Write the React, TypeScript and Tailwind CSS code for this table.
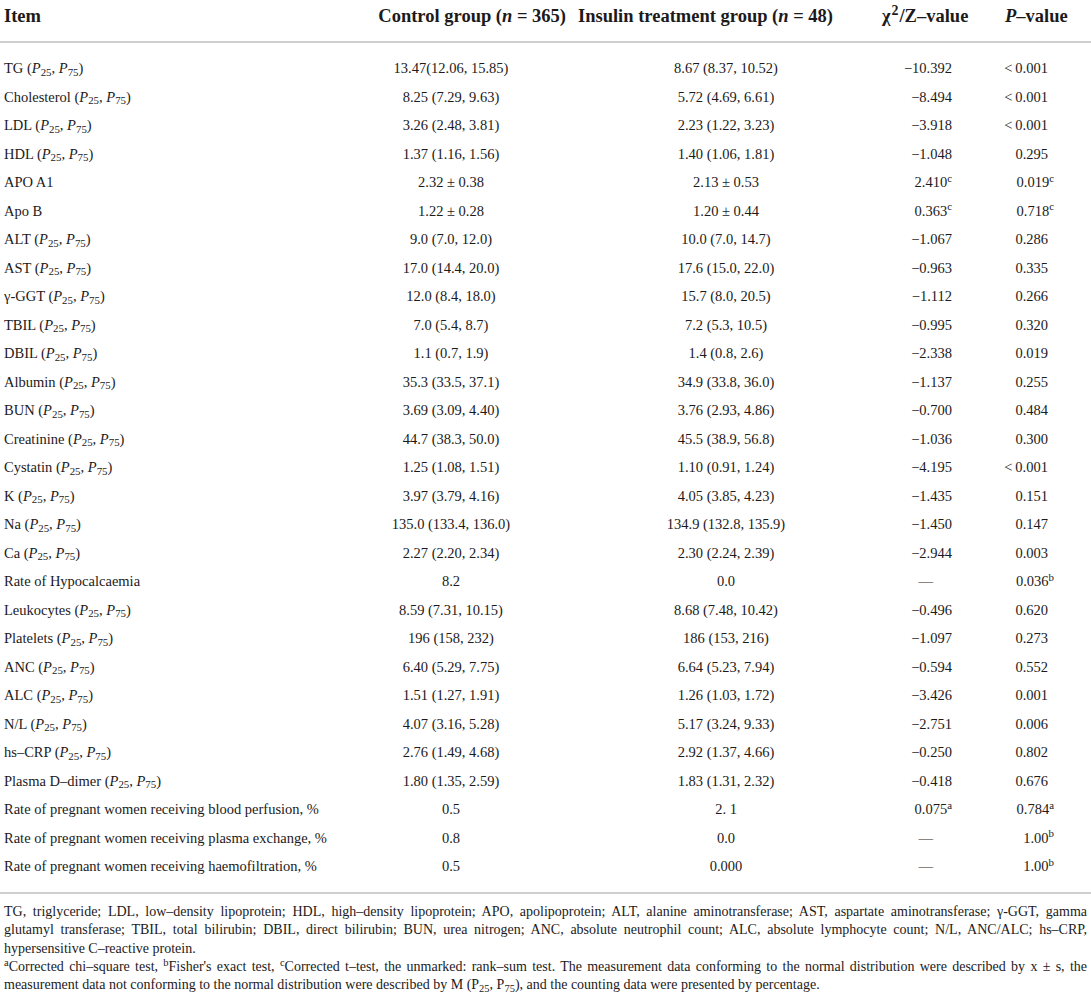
import React from 'react';

type Row = {
  item: string;
  p?: boolean;
  c: string;
  t: string;
  z: string;
  zs?: string;
  pv: string;
  ps?: string;
};

const rows: Row[] = [
  { item: 'TG', p: true, c: '13.47(12.06, 15.85)', t: '8.67 (8.37, 10.52)', z: '−10.392', pv: '<\u20090.001' },
  { item: 'Cholesterol', p: true, c: '8.25 (7.29, 9.63)', t: '5.72 (4.69, 6.61)', z: '−8.494', pv: '<\u20090.001' },
  { item: 'LDL', p: true, c: '3.26 (2.48, 3.81)', t: '2.23 (1.22, 3.23)', z: '−3.918', pv: '<\u20090.001' },
  { item: 'HDL', p: true, c: '1.37 (1.16, 1.56)', t: '1.40 (1.06, 1.81)', z: '−1.048', pv: '0.295' },
  { item: 'APO A1', c: '2.32 ± 0.38', t: '2.13 ± 0.53', z: '2.410', zs: 'c', pv: '0.019', ps: 'c' },
  { item: 'Apo B', c: '1.22 ± 0.28', t: '1.20 ± 0.44', z: '0.363', zs: 'c', pv: '0.718', ps: 'c' },
  { item: 'ALT', p: true, c: '9.0 (7.0, 12.0)', t: '10.0 (7.0, 14.7)', z: '−1.067', pv: '0.286' },
  { item: 'AST', p: true, c: '17.0 (14.4, 20.0)', t: '17.6 (15.0, 22.0)', z: '−0.963', pv: '0.335' },
  { item: 'γ-GGT', p: true, c: '12.0 (8.4, 18.0)', t: '15.7 (8.0, 20.5)', z: '−1.112', pv: '0.266' },
  { item: 'TBIL', p: true, c: '7.0 (5.4, 8.7)', t: '7.2 (5.3, 10.5)', z: '−0.995', pv: '0.320' },
  { item: 'DBIL', p: true, c: '1.1 (0.7, 1.9)', t: '1.4 (0.8, 2.6)', z: '−2.338', pv: '0.019' },
  { item: 'Albumin', p: true, c: '35.3 (33.5, 37.1)', t: '34.9 (33.8, 36.0)', z: '−1.137', pv: '0.255' },
  { item: 'BUN', p: true, c: '3.69 (3.09, 4.40)', t: '3.76 (2.93, 4.86)', z: '−0.700', pv: '0.484' },
  { item: 'Creatinine', p: true, c: '44.7 (38.3, 50.0)', t: '45.5 (38.9, 56.8)', z: '−1.036', pv: '0.300' },
  { item: 'Cystatin', p: true, c: '1.25 (1.08, 1.51)', t: '1.10 (0.91, 1.24)', z: '−4.195', pv: '<\u20090.001' },
  { item: 'K', p: true, c: '3.97 (3.79, 4.16)', t: '4.05 (3.85, 4.23)', z: '−1.435', pv: '0.151' },
  { item: 'Na', p: true, c: '135.0 (133.4, 136.0)', t: '134.9 (132.8, 135.9)', z: '−1.450', pv: '0.147' },
  { item: 'Ca', p: true, c: '2.27 (2.20, 2.34)', t: '2.30 (2.24, 2.39)', z: '−2.944', pv: '0.003' },
  { item: 'Rate of Hypocalcaemia', c: '8.2', t: '0.0', z: '—', pv: '0.036', ps: 'b' },
  { item: 'Leukocytes', p: true, c: '8.59 (7.31, 10.15)', t: '8.68 (7.48, 10.42)', z: '−0.496', pv: '0.620' },
  { item: 'Platelets', p: true, c: '196 (158, 232)', t: '186 (153, 216)', z: '−1.097', pv: '0.273' },
  { item: 'ANC', p: true, c: '6.40 (5.29, 7.75)', t: '6.64 (5.23, 7.94)', z: '−0.594', pv: '0.552' },
  { item: 'ALC', p: true, c: '1.51 (1.27, 1.91)', t: '1.26 (1.03, 1.72)', z: '−3.426', pv: '0.001' },
  { item: 'N/L', p: true, c: '4.07 (3.16, 5.28)', t: '5.17 (3.24, 9.33)', z: '−2.751', pv: '0.006' },
  { item: 'hs–CRP', p: true, c: '2.76 (1.49, 4.68)', t: '2.92 (1.37, 4.66)', z: '−0.250', pv: '0.802' },
  { item: 'Plasma D–dimer', p: true, c: '1.80 (1.35, 2.59)', t: '1.83 (1.31, 2.32)', z: '−0.418', pv: '0.676' },
  { item: 'Rate of pregnant women receiving blood perfusion, %', c: '0.5', t: '2. 1', z: '0.075', zs: 'a', pv: '0.784', ps: 'a' },
  { item: 'Rate of pregnant women receiving plasma exchange, %', c: '0.8', t: '0.0', z: '—', pv: '1.00', ps: 'b' },
  { item: 'Rate of pregnant women receiving haemofiltration, %', c: '0.5', t: '0.000', z: '—', pv: '1.00', ps: 'b' },
];

const cols = 'grid grid-cols-[360px_215px_295px_130px_91px] items-center';

function PRange() {
  return (
    <>
      {' '}(<i>P</i><sub>25</sub>, <i>P</i><sub>75</sub>)
    </>
  );
}

export default function App() {
  return (
    <div
      className="w-[1091px] bg-white text-[#1c1a1b]"
      style={{ fontFamily: '"Liberation Serif", "Times New Roman", serif' }}
    >
      {/* header */}
      <div className={`${cols} h-[43px] pb-[8px] border-b-2 border-[#cfcfcf] text-[18.5px] font-bold whitespace-nowrap`}>
        <div className="pl-[4px]">Item</div>
        <div className="text-right pr-[9px]">
          Control group (<i>n</i> = 365)
        </div>
        <div className="pl-[3px]">
          Insulin treatment group (<i>n</i> = 48)
        </div>
        <div className="pl-[12px]">
          χ<sup className="mx-[1px]">2</sup>/Z–value
        </div>
        <div className="pl-[5px]">
          <i>P</i>–value
        </div>
      </div>

      {/* body */}
      <div className="pt-[11.75px] pb-[10.75px] border-b-2 border-[#cfcfcf] text-[14.5px]">
        {rows.map((r) => (
          <div key={r.item} className={`${cols} h-[28.5px] whitespace-nowrap`}>
            <div className="pl-[4px]">
              {r.item}
              {r.p && <PRange />}
            </div>
            <div className="text-center pr-[33px]">{r.c}</div>
            <div className="text-center pl-[7px]">{r.t}</div>
            <div className="text-right pr-[48px]">
              {r.z === '—' ? (
                <span className="inline-block mr-[19px]">—</span>
              ) : (
                <>
                  {r.z}
                  {r.zs && <sup>{r.zs}</sup>}
                </>
              )}
            </div>
            <div className="text-right pr-[43px]">
              {r.pv}
              {r.ps && <sup className="-mr-[6px]">{r.ps}</sup>}
            </div>
          </div>
        ))}
      </div>

      {/* footnotes */}
      <div className="px-[4px] pt-[9px] text-[14px] leading-[18.25px]">
        <div className="text-justify [text-align-last:justify]">
          TG, triglyceride; LDL, low–density lipoprotein; HDL, high–density lipoprotein; APO, apolipoprotein; ALT,
          alanine aminotransferase; AST, aspartate aminotransferase; γ-GGT, gamma
        </div>
        <div className="text-justify [text-align-last:justify]">
          glutamyl transferase; TBIL, total bilirubin; DBIL, direct bilirubin; BUN, urea nitrogen; ANC, absolute
          neutrophil count; ALC, absolute lymphocyte count; N/L, ANC/ALC; hs–CRP,
        </div>
        <div>hypersensitive C–reactive protein.</div>
        <div className="text-justify [text-align-last:justify]">
          <sup>a</sup>Corrected chi–square test, <sup>b</sup>Fisher's exact test, <sup>c</sup>Corrected t–test, the
          unmarked: rank–sum test. The measurement data conforming to the normal distribution were described by x ± s,
          the
        </div>
        <div>
          measurement data not conforming to the normal distribution were described by M (P<sub>25</sub>, P
          <sub>75</sub>), and the counting data were presented by percentage.
        </div>
      </div>
    </div>
  );
}
